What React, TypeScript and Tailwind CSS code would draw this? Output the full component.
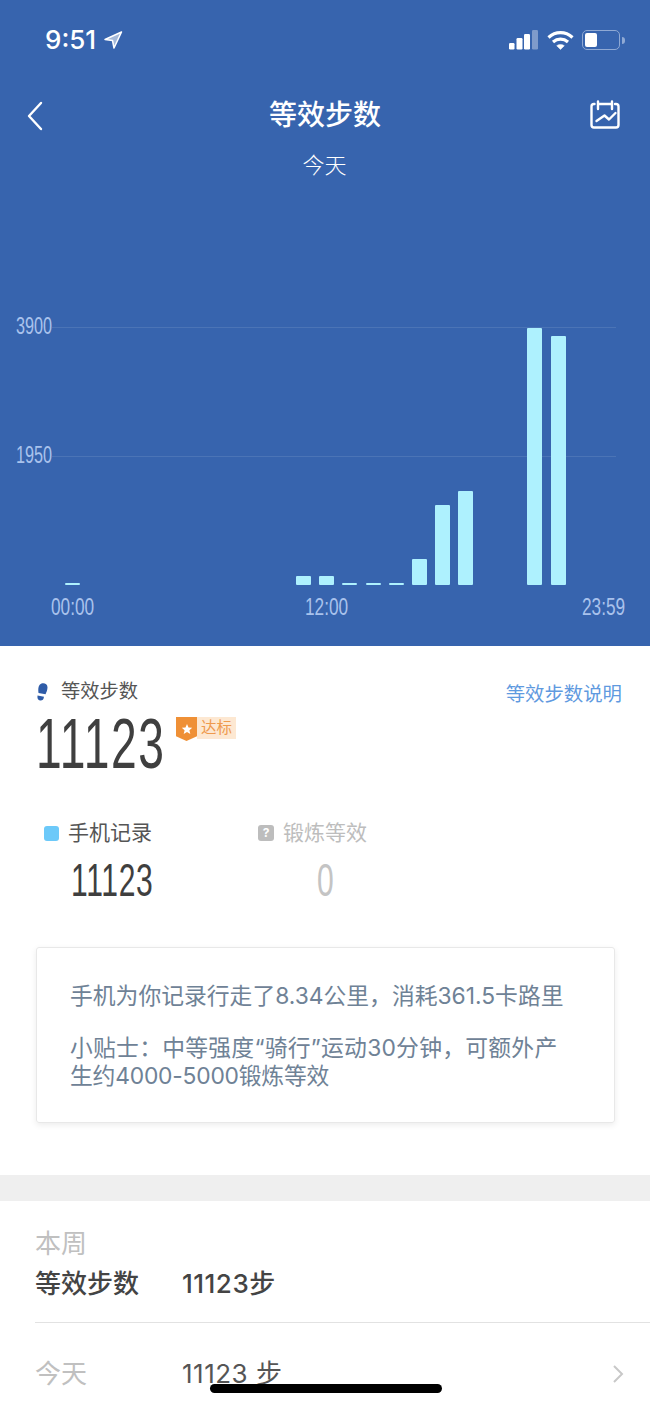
const cjk = "font-['Inter','Noto_Sans_CJK_SC',sans-serif]";
const num = "font-['Liberation_Sans',sans-serif] inline-block origin-left whitespace-nowrap";

const bars = [
  { x: 0, h: 2.5 },
  { x: 10, h: 9 },
  { x: 11, h: 9 },
  { x: 12, h: 2.5 },
  { x: 13, h: 2 },
  { x: 14, h: 2.5 },
  { x: 15, h: 26 },
  { x: 16, h: 80 },
  { x: 17, h: 94 },
  { x: 20, h: 257 },
  { x: 21, h: 249 },
];

function StatusBar() {
  return (
    <div className="relative h-[80px] text-white">
      <div className="flex h-[80px] items-center pl-[45px] pb-[1px]">
        <span className="font-['Inter',sans-serif] text-[26px] font-medium leading-none">9:51</span>
        <svg className="ml-[7px]" width="20" height="20" viewBox="0 0 20 20" fill="#ffffff" fillOpacity="0.55" stroke="white" strokeWidth="1.500" strokeLinejoin="round">
          <path d="M18.500 2 2 9.500l7.500 1L11 18z" />
        </svg>
      </div>
      {/* signal, wifi, battery */}
      <div className="absolute left-[508px] top-[30px] flex items-start">
        <svg width="31" height="20" viewBox="0 0 31 20" fill="white">
          <rect x="1" y="13" width="5.500" height="6.500" rx="1.200" />
          <rect x="8.500" y="8" width="6" height="11.500" rx="1.200" />
          <rect x="16" y="4" width="6" height="15.500" rx="1.200" />
          <rect x="24" y="0" width="6" height="19.500" rx="1.200" fill="#7f9bcb" />
        </svg>
        <svg className="ml-[8px]" width="27" height="20" viewBox="0 0 27 20" fill="none" stroke="white" strokeWidth="3.200">
          <path d="M1.500 7.500c7-6.500 17-6.500 24 0" />
          <path d="M6 12c4.500-3.800 10.500-3.800 15 0" />
          <path d="M13.500 19.500l-3.800-3.800c2.200-1.600 5.400-1.600 7.600 0z" fill="white" strokeWidth="0.500" />
        </svg>
        <div className="ml-[8px] flex items-center gap-[2px]">
          <div className="h-[20px] w-[38px] rounded-[5px] border-[1.500px] border-[#8fa9d4] p-[2px]">
            <div className="h-full w-[12px] rounded-[2px] bg-white" />
          </div>
          <div className="h-[7px] w-[2.500px] rounded-r-sm bg-[#8fa9d4]" />
        </div>
      </div>
    </div>
  );
}

function Chart() {
  return (
    <div className="relative h-[466px] font-['Liberation_Sans',sans-serif] text-[#a9c2ec]">
      {/* grid lines */}
      <div className="absolute left-[52px] right-[34px] top-[147px] h-px bg-white/10" />
      <div className="absolute left-[52px] right-[34px] top-[276px] h-px bg-white/10" />
      <span className="absolute left-[16px] top-[134px] origin-left scale-x-[0.69] text-[23.500px] leading-[24px]">3900</span>
      <span className="absolute left-[16px] top-[263px] origin-left scale-x-[0.69] text-[23.500px] leading-[24px]">1950</span>

      {/* bars */}
      <div className="absolute left-[65px] top-[405px] h-0 w-[500px]">
        {bars.map((b) => (
          <div
            key={b.x}
            className="absolute bottom-0 w-[15px] rounded-[1px] bg-[#aef1fe]"
            style={{ left: b.x * 23.12, height: b.h }}
          />
        ))}
      </div>

      <div className="absolute left-[51px] top-[414px] flex text-[23px] leading-[26px]">
        <span className="w-[43px] origin-left scale-x-[0.75] whitespace-nowrap">00:00</span>
        <span className="ml-[211px] w-[43px] origin-left scale-x-[0.75] whitespace-nowrap">12:00</span>
        <span className="ml-[234px] w-[43px] origin-left scale-x-[0.75] whitespace-nowrap">23:59</span>
      </div>
    </div>
  );
}

function Header() {
  return (
    <div className={`h-[646px] bg-[#3764ae] ${cjk}`}>
      <StatusBar />
      <div className="relative flex h-[70px] items-center justify-center text-white">
        <svg className="absolute left-[26px] top-[21px]" width="18" height="30" viewBox="0 0 18 30" fill="none" stroke="white" strokeWidth="2.400" strokeLinecap="round" strokeLinejoin="round">
          <path d="M15 2 3 15l12 13" />
        </svg>
        <span className="text-[28px] font-medium leading-none">等效步数</span>
        <svg className="absolute left-[589px] top-[20px]" width="32" height="30" viewBox="0 0 32 30" fill="none" stroke="white" strokeWidth="2.400" strokeLinecap="round" strokeLinejoin="round">
          <path d="M5.500 4H5a2.500 2.500 0 0 0-2.500 2.500V25A2.500 2.500 0 0 0 5 27.500h22a2.500 2.500 0 0 0 2.500-2.500V6.500A2.500 2.500 0 0 0 27 4h-1" />
          <path d="M9 1.500V9M23 1.500V9M9 4h14" />
          <path d="m7.500 21 8-5.500 4.500 4 6.500-6.500" />
        </svg>
      </div>
      <div className="pr-[1px] text-center text-[22px] font-light leading-[30px] text-white">今天</div>
      <Chart />
    </div>
  );
}

function Summary() {
  return (
    <div className={`pl-[36px] pr-[28px] pt-[33px] ${cjk}`}>
      <div className="flex justify-between">
        <div className="flex h-[26px] items-center gap-[13px]">
          <svg width="12" height="18" viewBox="0 0 12 18" fill="#2f5ca8">
            <path d="M5.500.5c3-1 6 .8 6 3.700 0 3-1.200 5-2 7L2.500 10C2 6.500 2 2 5.500.5z" />
            <path d="M1.500 12.500 8 13.800c-.3 3-2 4-4 3.700-1.900-.3-3-2.200-2.500-5z" />
          </svg>
          <span className="text-[19.300px] leading-none text-[#555]">等效步数</span>
        </div>
        <span className="mt-[2px] text-[19.400px] leading-[26px] text-[#5f9ae0]">等效步数说明</span>
      </div>
      <div className="mt-[-3px] flex h-[84px] items-start">
        <div className="w-[130px]">
          <span className={`${num} scale-x-[0.66] text-[70px] leading-[80px] tracking-[2.400px] text-[#3f3f3f]`}>11123</span>
        </div>
        <div className="ml-[10px] mt-[13px] flex h-[24px] items-start">
          <div className="flex h-[24px] w-[21px] items-center justify-center bg-[#ef9036] [clip-path:polygon(0_0,100%_0,100%_80%,50%_100%,0_80%)]">
            <svg width="12" height="12" viewBox="0 0 24 24" fill="white">
              <path d="m12 2 3 7 7.500.600-5.700 5 1.800 7.400L12 18l-6.600 4 1.800-7.400-5.700-5L9 9z" />
            </svg>
          </div>
          <span className="h-[22px] w-[39px] bg-[#fde8d2] pl-[4px] text-[15.500px] leading-[22px] text-[#ef9a4d]">达标</span>
        </div>
      </div>

      <div className="mt-[31px] flex">
        <div className="w-[222px]">
          <div className="flex items-center gap-[9px] pl-[8px]">
            <div className="h-[15px] w-[15px] rounded-[3px] bg-[#6cc9f9]" />
            <span className="text-[21px] leading-[28px] text-[#555]">手机记录</span>
          </div>
          <div className="mt-[8px] h-[47px] pl-[35px]">
            <span className={`${num} scale-x-[0.64] text-[47px] leading-[50px] tracking-[1px] text-[#3f3f3f]`}>11123</span>
          </div>
        </div>
        <div>
          <div className="flex items-center gap-[9px]">
            <div className="flex h-[16px] w-[16px] items-center justify-center rounded-[3px] bg-[#bdbdbd] text-[12px] font-bold leading-none text-white">?</div>
            <span className="text-[21px] leading-[28px] text-[#bdbdbd]">锻炼等效</span>
          </div>
          <div className="mt-[8px] h-[47px] pl-[59px]">
            <span className={`${num} scale-x-[0.64] text-[47px] leading-[50px] text-[#c4c4c4]`}>0</span>
          </div>
        </div>
      </div>

      <div className="mt-[45px] h-[176px] w-[579px] rounded-[3px] border border-[#e8e8e8] pl-[33px] pt-[34px] text-[22.800px] leading-[28px] text-[#6f8296] shadow-[0_2px_6px_rgba(0,0,0,0.08)]">
        <p>手机为你记录行走了8.34公里，消耗361.5卡路里</p>
        <p className="mt-[24px] tracking-[0.25px]">小贴士：中等强度“骑行”运动30分钟，可额外产</p>
        <p className="tracking-[-0.2px]">生约4000-5000锻炼等效</p>
      </div>
    </div>
  );
}

function WeekList() {
  return (
    <div className={`mt-[52px] ${cjk}`}>
      <div className="h-[26px] bg-[#efefef]" />
      <div className="pl-[35px]">
        <div className="border-b border-[#e2e2e2] pb-[23px] pt-[28px]">
          <div className="text-[26px] leading-[30px] text-[#c0c0c0]">本周</div>
          <div className="mt-[10px] flex text-[26px] font-medium leading-[30px] text-[#444]">
            <span className="w-[147px]">等效步数</span>
            <span className="tracking-[0.5px]">11123步</span>
          </div>
        </div>
        <div className="flex items-center pr-[26px] pt-[36px] text-[26px] leading-[30px]">
          <span className="w-[147px] text-[#c0c0c0]">今天</span>
          <span className="flex-1 tracking-[0.5px] text-[#555]">11123 步</span>
          <svg width="12" height="20" viewBox="0 0 12 20" fill="none" stroke="#c8c8c8" strokeWidth="2">
            <path d="m2 2 8 8-8 8" />
          </svg>
        </div>
      </div>
    </div>
  );
}

export default function App() {
  return (
    <div className="relative h-[1407px] w-[650px] overflow-hidden bg-white">
      <Header />
      <Summary />
      <WeekList />
      {/* home indicator */}
      <div className="absolute left-[210px] top-[1384px] h-[9px] w-[232px] rounded-full bg-black" />
    </div>
  );
}
